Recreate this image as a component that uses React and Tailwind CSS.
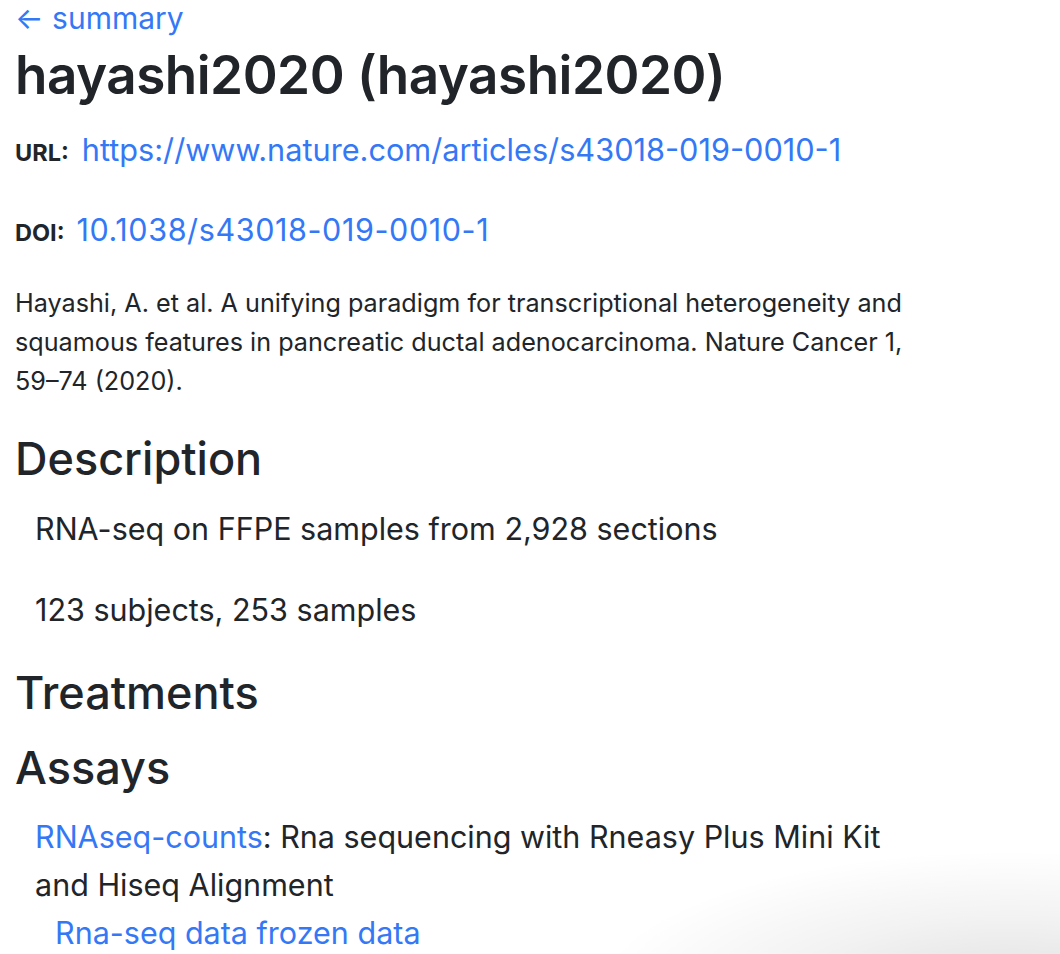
export default function App() {
  const font = { fontFamily: 'Inter, "Noto Sans", "Liberation Sans", sans-serif' };
  return (
    <div className="relative w-[1060px] h-[954px] overflow-hidden bg-white text-[#212529]" style={font}>
      <div className="w-[905px] pl-[15px]">
        <a href="#" className="block text-[30px] leading-[36px] text-[#3478f6] h-[36px]">← summary</a>
        <h1 className="mt-[9px] text-[53px] leading-[60px] font-semibold tracking-[-0.5px]">hayashi2020 (hayashi2020)</h1>
        <div className="mt-[25px] flex items-baseline gap-[13px] leading-[40px]">
          <span className="text-[23.5px] font-bold">URL:</span>
          <a href="#" className="text-[30.7px] text-[#3478f6]">https://www.nature.com/articles/s43018-019-0010-1</a>
        </div>
        <div className="mt-[37px] flex items-baseline gap-[12px] leading-[40px]">
          <span className="text-[23.5px] font-bold">DOI:</span>
          <a href="#" className="text-[30.5px] tracking-[0.6px] text-[#3478f6]">10.1038/s43018-019-0010-1</a>
        </div>
        <p className="mt-[31px] text-[25.2px] leading-[39px]">
          Hayashi, A. et al. A unifying paradigm for transcriptional heterogeneity and squamous features in pancreatic ductal adenocarcinoma. Nature Cancer 1, 59–74 (2020).
        </p>
        <h2 className="mt-[30px] text-[45px] leading-[56px] font-medium">Description</h2>
        <p className="mt-[22px] pl-[20px] text-[30.5px] leading-[40px]">RNA-seq on FFPE samples from 2,928 sections</p>
        <p className="mt-[41px] pl-[20px] text-[30.5px] leading-[40px]">123 subjects, 253 samples</p>
        <h2 className="mt-[35px] text-[45px] leading-[56px] font-medium">Treatments</h2>
        <h2 className="mt-[19px] text-[45px] leading-[56px] font-medium">Assays</h2>
        <p className="mt-[17px] pl-[20px] text-[30.5px] leading-[48px]">
          <a href="#" className="text-[#3478f6]">RNAseq-counts</a>: Rna sequencing with Rneasy Plus Mini Kit and Hiseq Alignment
        </p>
        <p className="pl-[40px] text-[30.5px] leading-[48px]">
          <a href="#" className="text-[#3478f6]">Rna-seq data frozen data</a>
        </p>
      </div>
      <div className="pointer-events-none absolute inset-0 bg-[radial-gradient(ellipse_420px_150px_at_1010px_1000px,rgba(0,0,0,0.13),rgba(0,0,0,0.05)_55%,rgba(0,0,0,0)_100%)]" />
    </div>
  );
}
